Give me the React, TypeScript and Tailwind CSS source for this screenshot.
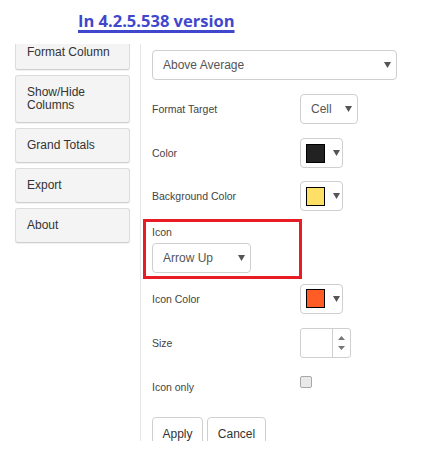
const sideItems = [
  { label: "Format Column" },
  { label: "Show/Hide\nColumns" },
  { label: "Grand Totals" },
  { label: "Export" },
  { label: "About" },
]

function Caret() {
  return (
    <svg width="7" height="6" viewBox="0 0 7 6" className="shrink-0">
      <path d="M0 0 L7 0 L3.5 6 Z" fill="#555" />
    </svg>
  )
}

function Select({ value, width }: { value: string; width: string }) {
  return (
    <div
      className={`flex h-[30px] ${width} items-center justify-between rounded-[4px] border border-[#cfcfcf] bg-white pl-[10px] pr-[5px] text-[12px] text-[#555]`}
    >
      <span>{value}</span>
      <Caret />
    </div>
  )
}

function ColorPick({ color }: { color: string }) {
  return (
    <div className="flex h-[30px] w-[43px] items-center gap-[8px] rounded-[4px] border border-[#cfcfcf] bg-white pl-[5px]">
      <div className="h-[19px] w-[19px] border border-black" style={{ backgroundColor: color }} />
      <Caret />
    </div>
  )
}

function Row({ label, children, className = "" }: { label: string; children: React.ReactNode; className?: string }) {
  return (
    <div className={`flex items-center ${className}`}>
      <div className="w-[148px] pt-[2px] text-[10.5px] text-[#444]">{label}</div>
      {children}
    </div>
  )
}

export default function App() {
  return (
    <div className="h-[450px] w-[431px] bg-white" style={{ fontFamily: '"Liberation Sans", Arial, sans-serif' }}>
      <div className="h-[44px] pl-[78px] pt-[9px]">
        <span
          className="text-[16.5px] font-bold text-[#3f48cc] underline decoration-[3px] underline-offset-[3px]"
          style={{ fontFamily: '"Open Sans", sans-serif' }}
        >
          In 4.2.5.538 version
        </span>
      </div>

      <div className="flex h-[397px] overflow-hidden">
        {/* sidebar */}
        <div className="w-[141px] shrink-0 border-r border-[#e6e6e6] pl-[15px]">
          <div className="-mt-[9px] flex w-[115px] flex-col gap-[5px]">
            {sideItems.map((item, i) => (
              <div
                key={i}
                className="whitespace-pre-line rounded-[3px] border border-[#dcdcdc] border-b-[#cfcfcf] bg-[#f4f4f4] px-[11px] py-[10px] text-[12px] leading-[13px] text-[#333] shadow-[0_1px_1px_rgba(0,0,0,0.06)]"
              >
                {item.label}
              </div>
            ))}
          </div>
        </div>

        {/* main panel */}
        <div className="flex flex-1 flex-col pl-[11px]">
          <div className="mt-[6px]">
            <Select value="Above Average" width="w-[245px]" />
          </div>

          <Row label="Format Target" className="mt-[14px]">
            <Select value="Cell" width="w-[58px]" />
          </Row>

          <Row label="Color" className="mt-[14px]">
            <ColorPick color="#222222" />
          </Row>

          <Row label="Background Color" className="mt-[13px]">
            <ColorPick color="#ffe066" />
          </Row>

          <div className="relative mt-[8px] h-[59px] pt-[6px]">
            <div className="absolute -left-[9px] top-0 h-[60px] w-[159px] border-[3px] border-[#e81c24]" />
            <div className="text-[10.5px] text-[#444]">Icon</div>
            <div className="mt-[2px]">
              <Select value="Arrow Up" width="w-[99px]" />
            </div>
          </div>

          <Row label="Icon Color" className="mt-[11px]">
            <ColorPick color="#ff5c26" />
          </Row>

          <Row label="Size" className="mt-[14px]">
            <div className="flex h-[30px] w-[51px] rounded-[3px] border border-[#cfcfcf] bg-white">
              <div className="flex-1 border-r border-[#cfcfcf]" />
              <div className="flex w-[17px] flex-col items-center justify-center gap-[6px]">
                <svg width="7" height="4" viewBox="0 0 7 4">
                  <path d="M0 4 L7 4 L3.5 0 Z" fill="#777" />
                </svg>
                <svg width="7" height="4" viewBox="0 0 7 4">
                  <path d="M0 0 L7 0 L3.5 4 Z" fill="#777" />
                </svg>
              </div>
            </div>
          </Row>

          <div className="mt-[14px] flex h-[26px]">
            <div className="w-[148px] pt-[8px] text-[10.5px] text-[#444]">Icon only</div>
            <div className="mt-[4px] h-[12px] w-[12px] rounded-[2px] border border-[#a8a8a8] bg-[#e9e9e9]" />
          </div>

          <div className="mt-[21px] flex gap-[4px]">
            <div className="flex h-[34px] w-[51px] items-center justify-center rounded-[4px] border border-[#cfcfcf] bg-white text-[12px] text-[#333]">
              Apply
            </div>
            <div className="flex h-[34px] w-[59px] items-center justify-center rounded-[4px] border border-[#cfcfcf] bg-white text-[12px] text-[#333]">
              Cancel
            </div>
          </div>
        </div>
      </div>
    </div>
  )
}
